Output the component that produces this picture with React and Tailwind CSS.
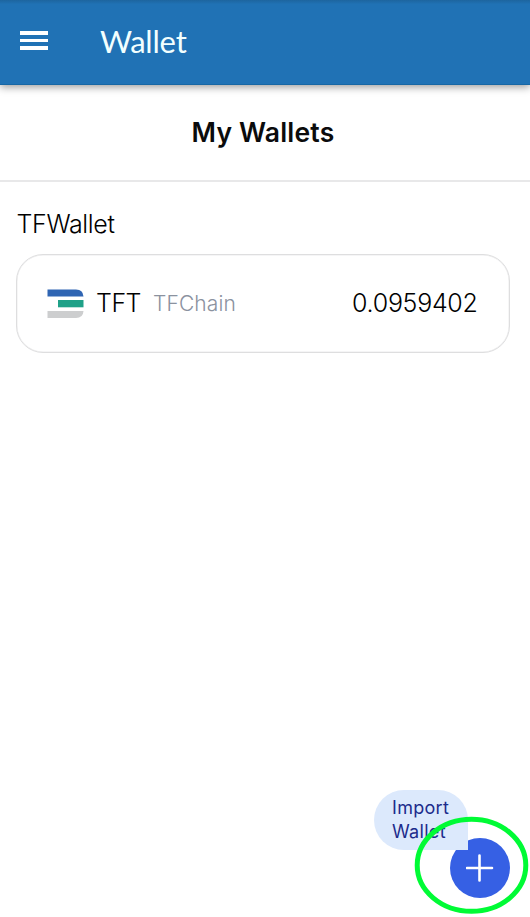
function ThreefoldIcon() {
  return (
    <svg width="37" height="30" viewBox="0 0 37 30" className="shrink-0">
      <path d="M.5 .5H29Q36 .5 36.5 7.5H.5Z" fill="#2f65b3" />
      <path d="M11 11H36.5V18.3H11Z" fill="#1fa188" />
      <path d="M.5 22H36.5Q36 29 29 29H.5Z" fill="#cdcecf" />
    </svg>
  );
}

function Header() {
  return (
    <header className="relative flex h-[85px] items-center border-b border-[#1767a5] bg-[#2072b5] bg-linear-to-b from-[#1d659f] to-[#2072b5] to-[5%] pl-5 shadow-[0_2px_8px_rgba(0,0,0,0.4)]">
      <button aria-label="Menu" className="-mt-[3px] flex w-7 flex-col gap-1">
        <span className="h-[3.5px] bg-white" />
        <span className="h-[3.5px] bg-white" />
        <span className="h-[3.5px] bg-white" />
      </button>
      <h1 className="-mt-[2px] ml-[52px] font-[Lato,sans-serif] text-[31px] leading-none tracking-[-0.2px] text-[#f2ffff]">
        Wallet
      </h1>
    </header>
  );
}

function WalletCard() {
  return (
    <section className="px-4 pt-[26px]">
      <h3 className="pl-[0.5px] text-[25px] leading-8 font-light tracking-[-0.35px] text-black">TFWallet</h3>
      <div className="mt-[14px] flex h-[99px] w-[493.5px] items-center rounded-[27px] border border-[#dededf] pr-[31px] pl-[30px] shadow-[inset_0_0_0_0.5px_#ececed]">
        <ThreefoldIcon />
        <span className="ml-[12px] text-[25px] font-light tracking-[-0.5px] text-black">TFT</span>
        <span className="ml-[12px] text-[21px] font-light tracking-[0.1px] text-[#8b929f]">TFChain</span>
        <span className="ml-auto text-[25px] font-light tracking-[-0.3px] text-black">0.0959402</span>
      </div>
    </section>
  );
}

function ImportAction() {
  return (
    <div className="absolute top-[790px] left-[374px] h-[127px] w-[156px]">
      <button
        aria-label="Add wallet"
        className="absolute top-12 left-[75.5px] flex size-[60px] items-center justify-center rounded-full bg-[#3660e4]"
      >
        <svg width="28" height="28" viewBox="0 0 28 28" stroke="white" strokeWidth="2.6" strokeLinecap="round">
          <path d="M13.5 1.5V26.5M1 14H26" />
        </svg>
      </button>
      <div className="absolute top-0 left-0 h-[60px] w-[93.5px] rounded-[30px] rounded-br-none bg-[#dce9fc] pt-[6px] pl-[18px] text-[18px] leading-6 font-normal tracking-[0.3px] text-[#1c2c8c]">
        Import
        <br />
        Wallet
      </div>
      <svg width="156" height="127" viewBox="0 0 156 127" className="pointer-events-none absolute top-0 left-0">
        <ellipse cx="97.5" cy="75.3" rx="54.3" ry="46" fill="none" stroke="#00fb35" strokeWidth="5" />
      </svg>
    </div>
  );
}

export default function App() {
  return (
    <main className="relative h-[917px] w-[530px] overflow-hidden bg-white font-[Inter,sans-serif]">
      <Header />
      <div className="flex h-[97px] items-center justify-center border-b-2 border-[#e8e8e9] pr-1">
        <h2 className="text-[26.5px] font-semibold tracking-[0.2px] text-[#0b0b0c]">My Wallets</h2>
      </div>
      <WalletCard />
      <ImportAction />
    </main>
  );
}
